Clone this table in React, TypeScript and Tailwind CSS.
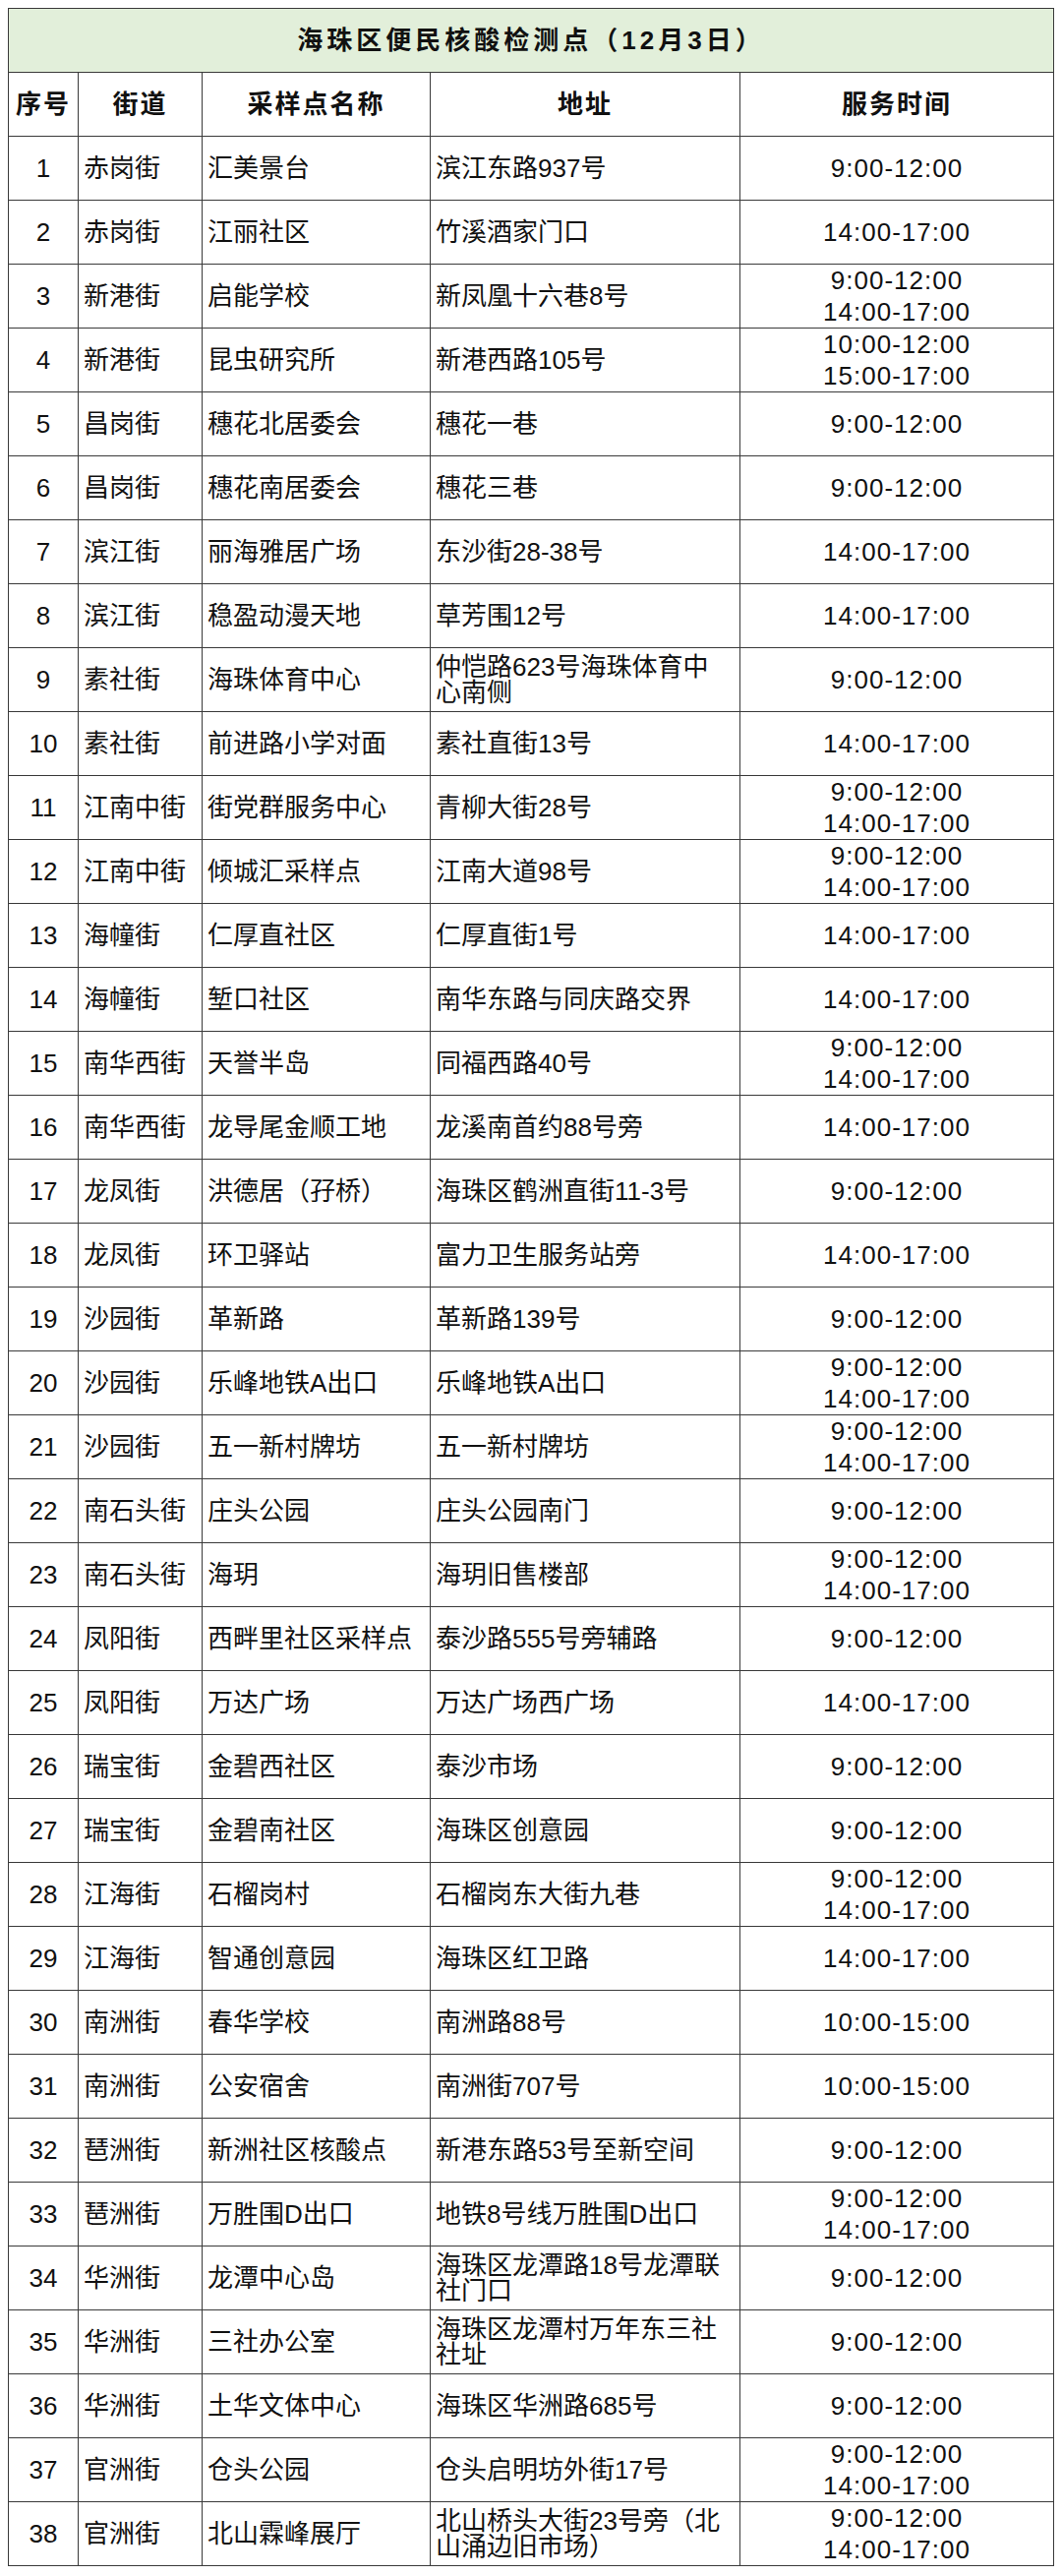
import React from "react";

type Row = [string, string, string, string[], string[]];

const rows: Row[] = [
  ["1", "赤岗街", "汇美景台", ["滨江东路937号"], ["9:00-12:00"]],
  ["2", "赤岗街", "江丽社区", ["竹溪酒家门口"], ["14:00-17:00"]],
  ["3", "新港街", "启能学校", ["新凤凰十六巷8号"], ["9:00-12:00", "14:00-17:00"]],
  ["4", "新港街", "昆虫研究所", ["新港西路105号"], ["10:00-12:00", "15:00-17:00"]],
  ["5", "昌岗街", "穗花北居委会", ["穗花一巷"], ["9:00-12:00"]],
  ["6", "昌岗街", "穗花南居委会", ["穗花三巷"], ["9:00-12:00"]],
  ["7", "滨江街", "丽海雅居广场", ["东沙街28-38号"], ["14:00-17:00"]],
  ["8", "滨江街", "稳盈动漫天地", ["草芳围12号"], ["14:00-17:00"]],
  ["9", "素社街", "海珠体育中心", ["仲恺路623号海珠体育中", "心南侧"], ["9:00-12:00"]],
  ["10", "素社街", "前进路小学对面", ["素社直街13号"], ["14:00-17:00"]],
  ["11", "江南中街", "街党群服务中心", ["青柳大街28号"], ["9:00-12:00", "14:00-17:00"]],
  ["12", "江南中街", "倾城汇采样点", ["江南大道98号"], ["9:00-12:00", "14:00-17:00"]],
  ["13", "海幢街", "仁厚直社区", ["仁厚直街1号"], ["14:00-17:00"]],
  ["14", "海幢街", "堑口社区", ["南华东路与同庆路交界"], ["14:00-17:00"]],
  ["15", "南华西街", "天誉半岛", ["同福西路40号"], ["9:00-12:00", "14:00-17:00"]],
  ["16", "南华西街", "龙导尾金顺工地", ["龙溪南首约88号旁"], ["14:00-17:00"]],
  ["17", "龙凤街", "洪德居（孖桥）", ["海珠区鹤洲直街11-3号"], ["9:00-12:00"]],
  ["18", "龙凤街", "环卫驿站", ["富力卫生服务站旁"], ["14:00-17:00"]],
  ["19", "沙园街", "革新路", ["革新路139号"], ["9:00-12:00"]],
  ["20", "沙园街", "乐峰地铁A出口", ["乐峰地铁A出口"], ["9:00-12:00", "14:00-17:00"]],
  ["21", "沙园街", "五一新村牌坊", ["五一新村牌坊"], ["9:00-12:00", "14:00-17:00"]],
  ["22", "南石头街", "庄头公园", ["庄头公园南门"], ["9:00-12:00"]],
  ["23", "南石头街", "海玥", ["海玥旧售楼部"], ["9:00-12:00", "14:00-17:00"]],
  ["24", "凤阳街", "西畔里社区采样点", ["泰沙路555号旁辅路"], ["9:00-12:00"]],
  ["25", "凤阳街", "万达广场", ["万达广场西广场"], ["14:00-17:00"]],
  ["26", "瑞宝街", "金碧西社区", ["泰沙市场"], ["9:00-12:00"]],
  ["27", "瑞宝街", "金碧南社区", ["海珠区创意园"], ["9:00-12:00"]],
  ["28", "江海街", "石榴岗村", ["石榴岗东大街九巷"], ["9:00-12:00", "14:00-17:00"]],
  ["29", "江海街", "智通创意园", ["海珠区红卫路"], ["14:00-17:00"]],
  ["30", "南洲街", "春华学校", ["南洲路88号"], ["10:00-15:00"]],
  ["31", "南洲街", "公安宿舍", ["南洲街707号"], ["10:00-15:00"]],
  ["32", "琶洲街", "新洲社区核酸点", ["新港东路53号至新空间"], ["9:00-12:00"]],
  ["33", "琶洲街", "万胜围D出口", ["地铁8号线万胜围D出口"], ["9:00-12:00", "14:00-17:00"]],
  ["34", "华洲街", "龙潭中心岛", ["海珠区龙潭路18号龙潭联", "社门口"], ["9:00-12:00"]],
  ["35", "华洲街", "三社办公室", ["海珠区龙潭村万年东三社", "社址"], ["9:00-12:00"]],
  ["36", "华洲街", "土华文体中心", ["海珠区华洲路685号"], ["9:00-12:00"]],
  ["37", "官洲街", "仓头公园", ["仓头启明坊外街17号"], ["9:00-12:00", "14:00-17:00"]],
  ["38", "官洲街", "北山霖峰展厅", ["北山桥头大街23号旁（北", "山涌边旧市场）"], ["9:00-12:00", "14:00-17:00"]],
];

const cell = "h-[65px] border-r border-b border-[#3a3a3a] flex items-center overflow-hidden";

export default function App() {
  return (
    <div className="min-h-[2619px] bg-white font-['Liberation_Sans','Noto_Sans_CJK_SC',sans-serif] text-[#111] text-[26px]">
      <div className="pt-[8px] pl-[8px]">
        <div className="w-[1064px] border-l border-t border-[#3a3a3a] grid grid-cols-[71px_126px_232px_315px_319px]">
          <div className={`${cell} col-span-5 justify-center bg-[#e2efda] font-bold tracking-[4px]`}>
            海珠区便民核酸检测点（12月3日）
          </div>
          <div className={`${cell} justify-center font-bold tracking-[2px]`}>序号</div>
          <div className={`${cell} justify-center font-bold tracking-[2px]`}>街道</div>
          <div className={`${cell} justify-center font-bold tracking-[2px]`}>采样点名称</div>
          <div className={`${cell} justify-center font-bold tracking-[2px]`}>地址</div>
          <div className={`${cell} justify-center font-bold tracking-[2px]`}>服务时间</div>
          {rows.map((r) => (
            <React.Fragment key={r[0]}>
              <div className={`${cell} justify-center`}>{r[0]}</div>
              <div className={`${cell} pl-[5px] whitespace-nowrap`}>{r[1]}</div>
              <div className={`${cell} pl-[5px] whitespace-nowrap`}>{r[2]}</div>
              <div className={`${cell} pl-[5px]`}>
                <div className="flex flex-col leading-[26px] whitespace-nowrap">
                  {r[3].map((l) => (
                    <span key={l}>{l}</span>
                  ))}
                </div>
              </div>
              <div className={`${cell} justify-center`}>
                <div className="flex flex-col items-center leading-[32px] tracking-[1px] whitespace-nowrap">
                  {r[4].map((l) => (
                    <span key={l}>{l}</span>
                  ))}
                </div>
              </div>
            </React.Fragment>
          ))}
        </div>
      </div>
    </div>
  );
}
